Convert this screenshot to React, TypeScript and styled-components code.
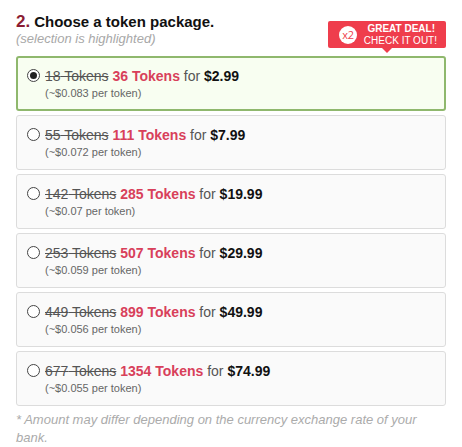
import React, { useState } from "react";
import styled, { createGlobalStyle } from "styled-components";

const GlobalStyle = createGlobalStyle`
  body {
    margin: 0;
    background: #ffffff;
    font-family: "Liberation Sans", Arial, sans-serif;
  }
`;

const Page = styled.div`
  width: 430px;
  padding: 12px 16px 0 16px;
`;

const Header = styled.div`
  display: flex;
  justify-content: space-between;
  align-items: flex-start;
  height: 44px;
`;

const TitleBlock = styled.div`
  display: flex;
  flex-direction: column;
`;

const Title = styled.h2`
  margin: 0;
  font-size: 15px;
  line-height: 20px;
  font-weight: bold;
  color: #111;
`;

const StepNumber = styled.span`
  font-size: 17px;
  color: #8c1c33;
  margin-right: 4px;
`;

const Subtitle = styled.div`
  font-size: 13px;
  font-style: italic;
  color: #a8a8a8;
  line-height: 14px;
`;

const Badge = styled.div`
  position: relative;
  margin-top: 9px;
  width: 118px;
  height: 27px;
  box-sizing: border-box;
  background: #ef3d4c;
  border-radius: 2px;
  display: flex;
  align-items: center;
  padding: 0 9px 0 11px;
  color: #fff;

  &::after {
    content: "";
    position: absolute;
    left: 54px;
    bottom: -5px;
    border-left: 5px solid transparent;
    border-right: 5px solid transparent;
    border-top: 5px solid #ef3d4c;
  }
`;

const Circle = styled.div`
  width: 18px;
  height: 18px;
  border-radius: 50%;
  background: #fff;
  color: #ef3d4c;
  font-family: "Open Sans", "Noto Sans", sans-serif;
  font-size: 11px;
  display: flex;
  align-items: center;
  justify-content: center;
  letter-spacing: -0.3px;
`;

const BadgeText = styled.div`
  flex: 1;
  text-align: right;
  font-size: 10px;
  line-height: 11.5px;
  text-transform: uppercase;
`;

const BadgeLine = styled.div<{ $bold?: boolean }>`
  font-weight: ${(p) => (p.$bold ? 700 : 400)};
  padding-right: ${(p) => (p.$bold ? "2px" : "0")};
`;

const List = styled.div`
  display: flex;
  flex-direction: column;
  gap: 4px;
`;

const Option = styled.label<{ $selected: boolean }>`
  display: flex;
  align-items: flex-start;
  height: 55px;
  box-sizing: border-box;
  border: ${(p) => (p.$selected ? "2px solid #8fb86d" : "1px solid #dcdcdc")};
  border-radius: 3px;
  background: ${(p) => (p.$selected ? "#f8fef1" : "#fafafa")};
  padding: ${(p) => (p.$selected ? "10px 9px" : "11px 10px")};
  cursor: pointer;
`;

const Radio = styled.span<{ $checked: boolean }>`
  flex: none;
  width: 11px;
  height: 11px;
  margin: 1px 5px 0 0;
  border: 1px solid #444;
  border-radius: 50%;
  background: #fff;
  display: flex;
  align-items: center;
  justify-content: center;

  &::after {
    content: "";
    width: 7px;
    height: 7px;
    border-radius: 50%;
    background: ${(p) => (p.$checked ? "#222" : "transparent")};
  }
`;

const Info = styled.div`
  display: flex;
  flex-direction: column;
`;

const MainLine = styled.div`
  font-size: 14px;
  line-height: 16px;
  color: #555;
`;

const OldAmount = styled.span`
  text-decoration: line-through;
  color: #555;
`;

const NewAmount = styled.span`
  font-weight: bold;
  color: #d8405a;
`;

const Price = styled.span`
  font-weight: bold;
  color: #111;
`;

const PerToken = styled.div`
  margin-top: 3px;
  font-size: 11px;
  line-height: 12px;
  color: #666;
`;

const Footnote = styled.p`
  margin: 5px 0 0 0;
  font-size: 13px;
  line-height: 18px;
  font-style: italic;
  color: #ababab;
`;

const packages = [
  { old: 18, amount: 36, price: "$2.99", per: "$0.083" },
  { old: 55, amount: 111, price: "$7.99", per: "$0.072" },
  { old: 142, amount: 285, price: "$19.99", per: "$0.07" },
  { old: 253, amount: 507, price: "$29.99", per: "$0.059" },
  { old: 449, amount: 899, price: "$49.99", per: "$0.056" },
  { old: 677, amount: 1354, price: "$74.99", per: "$0.055" },
];

function App() {
  const [selected, setSelected] = useState(0);

  return (
    <>
      <GlobalStyle />
      <Page>
        <Header>
          <TitleBlock>
            <Title>
              <StepNumber>2.</StepNumber>Choose a token package.
            </Title>
            <Subtitle>(selection is highlighted)</Subtitle>
          </TitleBlock>
          <Badge>
            <Circle>x2</Circle>
            <BadgeText>
              <BadgeLine $bold>Great Deal!</BadgeLine>
              <BadgeLine>Check it out!</BadgeLine>
            </BadgeText>
          </Badge>
        </Header>

        <List>
          {packages.map((p, i) => (
            <Option
              key={p.amount}
              $selected={selected === i}
              onClick={() => setSelected(i)}
            >
              <Radio $checked={selected === i} />
              <Info>
                <MainLine>
                  <OldAmount>{p.old} Tokens</OldAmount>{" "}
                  <NewAmount>{p.amount} Tokens</NewAmount> for{" "}
                  <Price>{p.price}</Price>
                </MainLine>
                <PerToken>(~{p.per} per token)</PerToken>
              </Info>
            </Option>
          ))}
        </List>

        <Footnote>
          * Amount may differ depending on the currency exchange rate of your
          bank.
        </Footnote>
      </Page>
    </>
  );
}

export default App;
